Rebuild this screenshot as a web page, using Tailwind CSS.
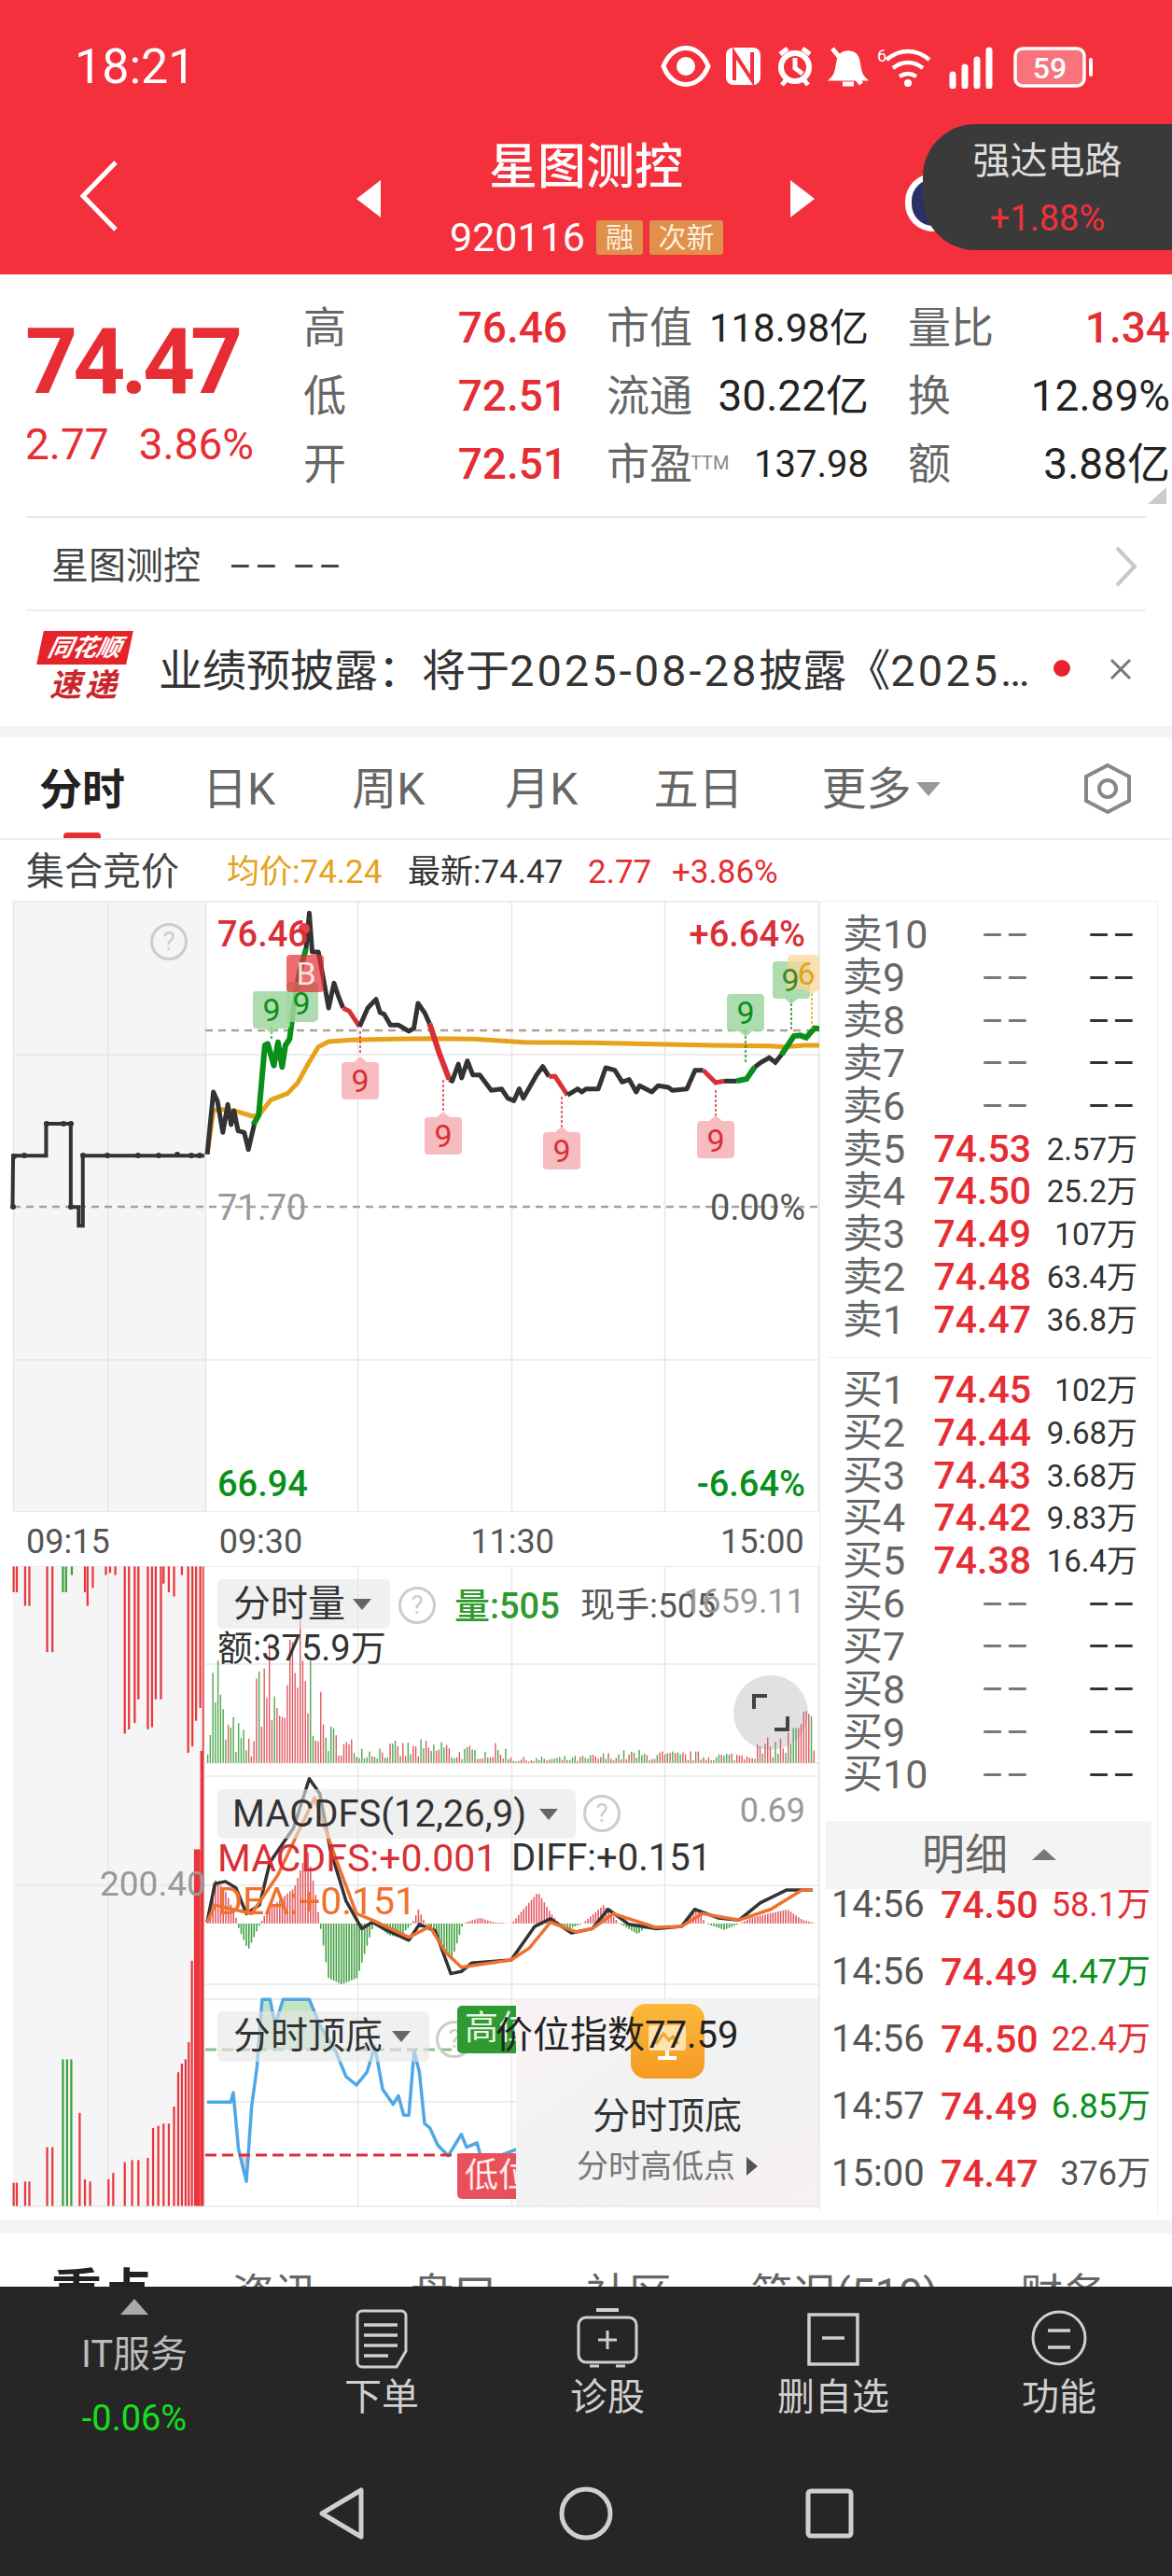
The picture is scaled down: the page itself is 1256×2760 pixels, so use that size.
<!DOCTYPE html>
<html lang="zh">
<head>
<meta charset="utf-8">
<title>星图测控</title>
<script src="https://cdn.jsdelivr.net/npm/@tailwindcss/browser@4"></script>
</head>
<body class="relative w-[1256px] h-[2760px] overflow-hidden bg-white text-[#222] font-['Roboto','Noto_Sans_CJK_SC',sans-serif]">

<!-- header -->
<header class="relative h-[294px] bg-[#f4303c] text-white">
  <div class="flex items-center justify-between h-[144px] pl-[80px] pr-[92px]">
    <span class="text-[52px] leading-none">18:21</span>
    <svg width="456" height="46" viewBox="708 49 456 46" fill="none" stroke="white" stroke-width="5">
      <path d="M711 71c10-26 38-26 48 0c-10 26-38 26-48 0z"/><circle cx="735" cy="71" r="10" fill="white" stroke="none"/>
      <rect x="778" y="51" width="37" height="40" rx="8" fill="white" stroke="none"/><path d="M787 86V57l19 29V56" stroke="#f4303c" stroke-width="4"/>
      <circle cx="852" cy="72" r="15" stroke-width="6"/><path d="M836 58l8-6M868 58l-8-6M852 62v11l8 6M838 91l5-6M866 91l-5-6"/>
      <path d="M893 84c6-6 4-14 7-22c3-7 15-7 18 0c3 8 1 16 7 22zM903 90h12M892 52l31 38" fill="white"/>
      <path d="M950 64c14-12 32-12 46 0M957 73c10-8 22-8 32 0M964 82c6-4 12-4 18 0" stroke-width="4.5"/><circle cx="973" cy="89" r="4" fill="white" stroke="none"/>
      <text x="940" y="66" fill="white" stroke="none" font-size="18">6</text>
      <path d="M1021 92v-12M1034 92v-20M1047 92v-28M1060 92v-38" stroke-width="7" stroke-linecap="round"/>
      <rect x="1088" y="52" width="74" height="40" rx="8" stroke-width="3.5" fill="#f8737b"/>
      <text x="1125" y="84" text-anchor="middle" fill="white" stroke="none" font-size="32" font-family="Roboto" font-weight="500">59</text>
    </svg>
  </div>
  <div class="absolute left-[1167px] top-[62px] w-[4px] h-[20px] rounded bg-white"></div>

  <svg class="absolute left-[84px] top-[172px]" width="44" height="76" viewBox="0 0 44 76" fill="none" stroke="white" stroke-width="5"><path d="M40 2L5 38l35 36"/></svg>
  <div class="absolute left-[382px] top-[193px] w-0 h-0 border-y-[20px] border-y-transparent border-r-[26px] border-r-white"></div>
  <div class="absolute left-[847px] top-[193px] w-0 h-0 border-y-[20px] border-y-transparent border-l-[26px] border-l-white"></div>
  <div class="absolute left-[378px] top-[154px] w-[500px] text-center text-[52px] leading-none font-medium">星图测控</div>
  <div class="absolute left-[482px] top-[236px] flex items-center gap-[7px]">
    <span class="mr-[5px] text-[43px] leading-[37px]">920116</span>
    <span class="h-[37px] w-[50px] rounded-[3px] bg-[#e0904a] text-center text-[30px] leading-[37px] text-[#fdeedd]">融</span>
    <span class="h-[37px] w-[79px] rounded-[3px] bg-[#e0904a] text-center text-[30px] leading-[37px] text-[#fdeedd]">次新</span>
  </div>

  <div class="absolute left-[970px] top-[186px] w-[60px] h-[62px] rounded-full bg-white flex items-center justify-center"><div class="w-[46px] h-[50px] rounded-full bg-[#2b2f66]"></div></div>
  <div class="absolute right-0 top-[133px] w-[267px] h-[135px] rounded-l-[56px] bg-[#3a3a3a] flex flex-col items-center gap-[20px] pt-[18px]">
    <span class="text-[40px] leading-[44px] text-[#ddd]">强达电路</span>
    <span class="text-[38px] leading-[38px] text-[#f4303c]">+1.88%</span>
  </div>
</header>

<!-- quote -->
<section class="relative flex h-[261px] border-b-2 border-[#e8e8e8] mx-[28px]">
  <div class="-ml-[1px] w-[298px] shrink-0 pt-[47px] text-[#e52d33]">
    <div class="text-[98px] leading-[94px] font-bold tracking-[-5px]">74.47</div>
    <div class="flex gap-[32px] mt-[19px] text-[46px] leading-[44px]"><span>2.77</span><span>3.86%</span></div>
  </div>
  <div class="pt-[21px] text-[46px] leading-[73px]">
    <div class="grid grid-cols-[283px_281px_281px] gap-x-[42px] h-[73px]">
      <div class="flex justify-between"><span class="text-[#666]">高</span><span class="font-medium text-[#e52d33]">76.46</span></div>
      <div class="flex justify-between"><span class="text-[#666]">市值</span><span class="text-[42px] text-[#222]">118.98亿</span></div>
      <div class="flex justify-between"><span class="text-[#666]">量比</span><span class="font-medium text-[#e52d33]">1.34</span></div>
    </div>
    <div class="grid grid-cols-[283px_281px_281px] gap-x-[42px] h-[73px]">
      <div class="flex justify-between"><span class="text-[#666]">低</span><span class="font-medium text-[#e52d33]">72.51</span></div>
      <div class="flex justify-between"><span class="text-[#666]">流通</span><span class="text-[46px] text-[#222]">30.22亿</span></div>
      <div class="flex justify-between"><span class="text-[#666]">换</span><span class="text-[46px] text-[#222]">12.89%</span></div>
    </div>
    <div class="grid grid-cols-[283px_281px_281px] gap-x-[42px] h-[73px]">
      <div class="flex justify-between"><span class="text-[#666]">开</span><span class="font-medium text-[#e52d33]">72.51</span></div>
      <div class="flex justify-between"><span class="text-[#666]">市盈<sup class="text-[20px] text-[#888] -ml-[2px]">TTM</sup></span><span class="text-[40px] text-[#222]">137.98</span></div>
      <div class="flex justify-between"><span class="text-[#666]">额</span><span class="text-[46px] text-[#222]">3.88亿</span></div>
    </div>
  </div>
  <div class="absolute right-[-22px] top-[228px] w-0 h-0 border-b-[18px] border-b-[#ccc] border-l-[20px] border-l-transparent"></div>
</section>

<!-- stock row -->
<section class="flex items-center justify-between h-[100px] mx-[28px] pl-[27px] pt-[5px] border-b-2 border-[#efefef]">
  <div class="flex items-center text-[#444]">
    <span class="text-[40px] leading-none">星图测控</span>
    <span class="ml-[30px] text-[38px] leading-none tracking-[3px]">–– ––</span>
  </div>
  <svg width="26" height="44" viewBox="0 0 26 44" fill="none" stroke="#c8c8c8" stroke-width="4" class="mr-[8px]"><path d="M3 2l19 20L3 42"/></svg>
</section>

<!-- news row -->
<section class="relative flex items-center h-[123px] pl-[43px] pt-[3px]">
  <div class="flex flex-col items-center w-[96px] -mt-[4px]">
    <div class="w-full h-[36px] -skew-x-12 bg-[#e4232b] text-center text-[26px] leading-[36px] font-bold italic text-white">同花顺</div>
    <div class="text-[34px] leading-[44px] font-bold italic tracking-[4px] text-[#c9262c]">速递</div>
  </div>
  <span class="ml-[31px] w-[960px] text-[47px] leading-none whitespace-nowrap text-[#333]">业绩预披露：将于<span class="tracking-[3px]">2025-08-28</span>披露《<span class="tracking-[3px]">2025</span>…</span>
  <span class="absolute left-[1129px] top-[52px] w-[18px] h-[18px] rounded-full bg-[#e8232b]"></span>
  <svg class="absolute left-[1188px] top-[49px]" width="26" height="26" viewBox="0 0 26 26" stroke="#777" stroke-width="3"><path d="M3 3l20 20M23 3L3 23"/></svg>
</section>
<div class="h-[12px] bg-[#f4f4f4]"></div>

<!-- tabs -->
<nav class="relative flex items-center h-[110px] pt-[3px] border-b-2 border-[#efefef] text-[48px] leading-none text-[#666]">
  <span class="ml-[42px] font-bold text-[46px] text-[#222]">分时</span>
  <span class="ml-[83px]">日K</span>
  <span class="ml-[82px]">周K</span>
  <span class="ml-[86px]">月K</span>
  <span class="ml-[81px]">五日</span>
  <span class="ml-[84px]">更多</span>
  <span class="ml-[6px] w-0 h-0 border-x-[13px] border-x-transparent border-t-[15px] border-t-[#999]"></span>
  <svg class="absolute left-[1159px] top-[27px]" width="56" height="56" viewBox="0 0 56 56" fill="none" stroke="#888" stroke-width="4"><path d="M28 3l23 12v26L28 53 5 41V15z"/><circle cx="28" cy="28" r="9"/></svg>
  <span class="absolute left-[68px] bottom-0 w-[40px] h-[6px] rounded-t bg-[#e52d33]"></span>
</nav>

<!-- price line -->
<div class="flex items-center h-[60px] pl-[28px] pt-[8px] text-[35px] leading-none">
  <span class="w-[215px] text-[41px] text-[#444]">集合竞价</span>
  <span class="w-[194px] text-[#e5a21a]">均价:74.24</span>
  <span class="w-[193px] text-[#333]">最新:74.47</span>
  <span class="w-[90px] text-[#e52d33]">2.77</span>
  <span class="text-[#e52d33]">+3.86%</span>
</div>

<!-- charts + order book -->
<main class="flex h-[1419px]">
  <div class="relative w-[878px] shrink-0">
    <!-- intraday price -->
    <div class="relative h-[660px]">
      <svg class="absolute inset-0" width="878" height="660" viewBox="0 960 878 660" fill="none">
        <rect x="14" y="966" width="206" height="654" fill="#f5f5f5"/>
        <path d="M14.5 966V1620M220.5 966V1620M116 966V1620M383.5 966V1620M548.5 966V1620M712.5 966V1620M877.5 966V1620M14 966H878M14 1130H878M14 1457H878M14 1620H878" stroke="#e6e6e6" stroke-width="1.5"/>
        <path d="M14 1293H878M220 1104H878" stroke="#a8a395" stroke-width="2.5" stroke-dasharray="8 6"/>
        <g transform="translate(0 900) scale(0.5618 0.3333)" stroke="#333" vector-effect="non-scaling-stroke">
          <polyline vector-effect="non-scaling-stroke" stroke-width="4" points="24,1180 25,1015 88,1015 88,912 135,912 135,1180 150,1180 150,1240 158,1240 158,1015 390,1015"/>
        </g>
        <g fill="#333"><circle cx="14" cy="1293" r="3"/><circle cx="15" cy="1239" r="3"/><circle cx="26" cy="1238" r="3"/><circle cx="50" cy="1204" r="3"/><circle cx="68" cy="1204" r="3"/><circle cx="76" cy="1204" r="3"/><circle cx="76" cy="1293" r="3"/><circle cx="89" cy="1238" r="3"/><circle cx="115" cy="1238" r="3"/><circle cx="148" cy="1238" r="3"/><circle cx="170" cy="1238" r="3"/><circle cx="190" cy="1237" r="3"/><circle cx="205" cy="1238" r="3"/><circle cx="214" cy="1238" r="3"/></g>

        <g transform="translate(200 950) scale(0.4412 0.3333)">
          <polyline vector-effect="non-scaling-stroke" stroke="#e5a21a" stroke-width="5" points="50,860 65,720 80,715 120,722 160,738 175,735 205,685 245,665 270,630 295,570 320,515 345,498 400,493 500,490 590,488 700,490 820,500 980,502 1140,506 1280,510 1420,512 1450,515 1500,510 1545,510"/>
          <polyline vector-effect="non-scaling-stroke" stroke="#333" stroke-width="5" stroke-linejoin="round" points="50,860 65,660 75,690 88,790 100,700 108,765 115,720 125,785 140,790 150,845 165,760"/>
          <polyline vector-effect="non-scaling-stroke" stroke="#0a8f1a" stroke-width="6" stroke-linejoin="round" points="162,765 175,735 190,510 197,505 212,575 222,500 232,580 240,510 250,490 262,370 275,270 290,200"/>
          <polyline vector-effect="non-scaling-stroke" stroke="#333" stroke-width="5" stroke-linejoin="round" points="290,200 298,85 305,210 320,210 330,280 345,390 358,310 368,350 380,390"/>
          <polyline vector-effect="non-scaling-stroke" stroke="#d92f36" stroke-width="5" points="380,390 395,400 420,450"/>
          <polyline vector-effect="non-scaling-stroke" stroke="#333" stroke-width="5" stroke-linejoin="round" points="420,450 440,390 460,362 470,405 480,410 495,445 515,445 540,465 552,455 562,375 578,405 590,440"/>
          <polyline vector-effect="non-scaling-stroke" stroke="#d92f36" stroke-width="6" points="590,440 600,480 615,540 638,620"/>
          <polyline vector-effect="non-scaling-stroke" stroke="#333" stroke-width="5" stroke-linejoin="round" points="638,620 645,625 660,570 668,615 682,560 695,605 712,605 740,655 765,650 780,680 795,688 808,650 818,680 850,605 865,578 880,610"/>
          <polyline vector-effect="non-scaling-stroke" stroke="#d92f36" stroke-width="5" points="880,610 895,610 925,670"/>
          <polyline vector-effect="non-scaling-stroke" stroke="#333" stroke-width="5" stroke-linejoin="round" points="925,670 950,650 960,660 970,650 1000,650 1018,582 1040,590 1058,628 1075,620 1092,660 1100,640 1130,660 1145,640 1170,645 1180,655 1215,650 1235,590 1255,590"/>
          <polyline vector-effect="non-scaling-stroke" stroke="#d92f36" stroke-width="5" points="1255,590 1285,630 1305,625"/>
          <polyline vector-effect="non-scaling-stroke" stroke="#333" stroke-width="5" points="1305,625 1335,625"/>
          <polyline vector-effect="non-scaling-stroke" stroke="#0a8f1a" stroke-width="6" points="1335,625 1360,618 1380,580"/>
          <polyline vector-effect="non-scaling-stroke" stroke="#333" stroke-width="5" points="1380,580 1395,565 1415,550 1430,565 1445,540"/>
          <polyline vector-effect="non-scaling-stroke" stroke="#0a8f1a" stroke-width="6" points="1445,540 1475,480 1490,478 1505,485 1525,455 1545,458"/>
        </g>

        <!-- signal marks -->
        <path d="M291 1100V1115M799 1105V1140M848 1070V1104" stroke="#0a8f1a" stroke-width="1.5" stroke-dasharray="3 2"/>
        <path d="M870 1064V1102" stroke="#e5a21a" stroke-width="1.5" stroke-dasharray="3 2"/>
        <path d="M386 1105V1130M475 1157V1190M602 1175V1208M767 1168V1196" stroke="#d92f36" stroke-width="1.5" stroke-dasharray="3 2"/>
        <g fill="#9fd6a0" fill-opacity="0.85">
          <path d="M275 1062h32a4 4 0 0 1 4 4v32a4 4 0 0 1-4 4h-9l-7 6-7-6h-9a4 4 0 0 1-4-4v-32a4 4 0 0 1 4-4z"/>
          <rect x="307" y="1052" width="34" height="43" rx="5"/>
          <path d="M783 1065h32a4 4 0 0 1 4 4v32a4 4 0 0 1-4 4h-9l-7 6-7-6h-9a4 4 0 0 1-4-4v-32a4 4 0 0 1 4-4z"/>
          <path d="M832 1030h32a4 4 0 0 1 4 4v32a4 4 0 0 1-4 4h-9l-7 6-7-6h-9a4 4 0 0 1-4-4v-32a4 4 0 0 1 4-4z"/>
        </g>
        <g fill="#f7bcbf">
          <path d="M379 1138l7-6 7 6h9a4 4 0 0 1 4 4v32a4 4 0 0 1-4 4h-32a4 4 0 0 1-4-4v-32a4 4 0 0 1 4-4z"/>
          <path d="M468 1197l7-6 7 6h9a4 4 0 0 1 4 4v32a4 4 0 0 1-4 4h-32a4 4 0 0 1-4-4v-32a4 4 0 0 1 4-4z"/>
          <path d="M595 1213l7-6 7 6h9a4 4 0 0 1 4 4v32a4 4 0 0 1-4 4h-32a4 4 0 0 1-4-4v-32a4 4 0 0 1 4-4z"/>
          <path d="M760 1201l7-6 7 6h9a4 4 0 0 1 4 4v32a4 4 0 0 1-4 4h-32a4 4 0 0 1-4-4v-32a4 4 0 0 1 4-4z"/>
        </g>
        <rect x="307" y="1023" width="40" height="40" rx="4" fill="#e52d33" fill-opacity="0.7"/>
        <path d="M844 1028a5 5 0 0 1 5-5h24a5 5 0 0 1 5 5v32l-8 5-8-5h-13a5 5 0 0 1-5-5z" fill="#fbd49a" fill-opacity="0.75"/>
        <circle cx="326" cy="995" r="6" fill="#e8404a"/>
        <g font-family="Roboto" font-size="34" text-anchor="middle">
          <text x="291" y="1094" fill="#0a8f1a">9</text>
          <text x="323" y="1087" fill="#0a8f1a">9</text>
          <text x="799" y="1097" fill="#0a8f1a">9</text>
          <text x="847" y="1062" fill="#3f8a20">9</text>
          <text x="864" y="1055" fill="#e5a21a">6</text>
          <text x="386" y="1170" fill="#d92f36">9</text>
          <text x="475" y="1229" fill="#d92f36">9</text>
          <text x="602" y="1245" fill="#d92f36">9</text>
          <text x="767" y="1234" fill="#d92f36">9</text>
          <text x="328" y="1055" fill="#ffffff" fill-opacity="0.85">B</text>
        </g>
      </svg>
      <span class="absolute left-[233px] top-[22px] text-[38px] leading-none font-medium text-[#d92f36]">76.46</span>
      <span class="absolute right-[15px] top-[22px] text-[38px] leading-none font-medium text-[#d92f36]">+6.64%</span>
      <span class="absolute left-[233px] top-[315px] text-[38px] leading-none text-[#999]">71.70</span>
      <span class="absolute right-[15px] top-[315px] text-[38px] leading-none text-[#555]">0.00%</span>
      <span class="absolute left-[233px] top-[611px] text-[38px] leading-none font-medium text-[#0a8f1a]">66.94</span>
      <span class="absolute right-[15px] top-[611px] text-[38px] leading-none font-medium text-[#0a8f1a]">-6.64%</span>
      <span class="absolute left-[161px] top-[29px] w-[40px] h-[40px] rounded-full border-[3px] border-[#ccc] text-center text-[28px] leading-[34px] text-[#ccc]">?</span>
    </div>

    <!-- time axis -->
    <div class="flex h-[58px] items-center pt-[6px] text-[36px] leading-none text-[#555]">
      <span class="ml-[28px]">09:15</span>
      <span class="ml-[117px]">09:30</span>
      <span class="ml-[180px]">11:30</span>
      <span class="ml-[178px]">15:00</span>
    </div>

    <!-- volume / MACD / top-bottom -->
    <div class="relative h-[701px]">
      <svg class="absolute inset-0" width="878" height="701" viewBox="0 1678 878 701" fill="none">
        <rect x="14" y="1678" width="206" height="686" fill="#f5f5f5"/>
        <path d="M116 1678V2364M383.5 1678V2364M548.5 1678V2364M712.5 1678V2364M877.5 1678V2364M220 1783H878M220 1889H878M220 1903H878M14 2020H878M220 2126H878M220 2142H878M220 2252H878M14 2364H878M14 1678H878" stroke="#e8e8e8" stroke-width="1.5"/>
        <g id="sub" transform="translate(0 1660) scale(0.5618 0.4592)">
          <g id="left-bars"></g>
          <g id="vol-bars"></g>
          <g id="macd-bars"></g>
          <polyline vector-effect="non-scaling-stroke" stroke="#333" stroke-width="3.5" stroke-linejoin="round" points="395,870 410,780 430,775 450,790 470,850 495,830 515,730 560,650 590,535 610,570 630,700 660,820 690,885 710,870 740,890 780,912 800,875 830,890 860,990 880,985 900,965 975,958 1020,880 1050,862 1090,895 1130,885 1160,840 1200,875 1250,885 1300,880 1325,840 1370,860 1410,865 1450,825 1500,795 1550,795"/>
          <polyline vector-effect="non-scaling-stroke" stroke="#f07030" stroke-width="3.5" stroke-linejoin="round" points="395,870 410,830 480,850 530,760 600,580 640,720 680,850 710,865 780,905 820,880 850,940 880,975 975,958 1010,930 1050,870 1100,893 1130,885 1170,850 1250,882 1300,880 1340,850 1410,865 1470,840 1530,795 1550,795"/>
          <polygon fill="#a9d8a9" fill-opacity="0.7" points="490,1168 500,1050 515,1050 525,1110 540,1050 590,1050 610,1110 640,1168"/>
          <polygon fill="#f5b8bc" fill-opacity="0.8" points="455,1413 470,1475 478,1413"/>
          <polyline vector-effect="non-scaling-stroke" stroke="#4fa8e6" stroke-width="3.5" stroke-linejoin="round" points="395,1290 440,1290 445,1268 455,1400 470,1475 480,1300 490,1210 500,1050 515,1050 525,1110 540,1050 590,1050 610,1110 640,1170 660,1230 680,1250 700,1220 715,1160 730,1260 750,1295 760,1275 770,1320 780,1320 790,1170 800,1220 810,1340 820,1350 835,1390 855,1415 880,1365 890,1395 910,1385 920,1430 985,1400"/>
        </g>
        <path d="M220 2196H553" stroke="#8cc08c" stroke-width="3" stroke-dasharray="12 6"/>
        <path d="M220 2309H553" stroke="#d9303a" stroke-width="3" stroke-dasharray="12 6"/>
      </svg>

      <span class="absolute left-[107px] top-[322px] text-[37px] leading-none text-[#999]">200.40</span>

      <div class="absolute left-[233px] top-[14px] flex items-center w-[185px] h-[53px] rounded-[6px] bg-[#e6e6e6]/60 pl-[17px]">
        <span class="text-[40px] leading-none text-[#333]">分时量</span>
        <span class="ml-[8px] w-0 h-0 border-x-[10px] border-x-transparent border-t-[12px] border-t-[#666]"></span>
      </div>
      <span class="absolute left-[427px] top-[22px] w-[40px] h-[40px] rounded-full border-[3px] border-[#ccc] text-center text-[28px] leading-[34px] text-[#ccc]">?</span>
      <span class="absolute left-[487px] top-[24px] text-[38px] leading-none font-medium text-[#2f9a2f]">量:505</span>
      <span class="absolute left-[622px] top-[24px] text-[37px] leading-none text-[#555]">现手:505</span>
      <span class="absolute right-[15px] top-[20px] text-[36px] leading-none text-[#999]">1659.11</span>
      <span class="absolute left-[233px] top-[69px] text-[38px] leading-none text-[#333]">额:375.9万</span>
      <div class="absolute left-[786px] top-[117px] w-[80px] h-[80px] rounded-full bg-[#888]/25"></div>
      <svg class="absolute left-[806px] top-[137px]" width="40" height="40" viewBox="0 0 40 40" fill="none" stroke="#444" stroke-width="4"><path d="M2 16V2h14M38 24v14H24"/></svg>

      <div class="absolute left-[233px] top-[239px] flex items-center w-[384px] h-[53px] rounded-[6px] bg-[#e6e6e6]/60 pl-[16px]">
        <span class="text-[40px] leading-none text-[#333]">MACDFS(12,26,9)</span>
        <span class="ml-[14px] w-0 h-0 border-x-[10px] border-x-transparent border-t-[12px] border-t-[#666]"></span>
      </div>
      <span class="absolute left-[625px] top-[245px] w-[40px] h-[40px] rounded-full border-[3px] border-[#ccc] text-center text-[28px] leading-[34px] text-[#ccc]">?</span>
      <span class="absolute right-[15px] top-[244px] text-[36px] leading-none text-[#999]">0.69</span>
      <span class="absolute left-[233px] top-[293px] text-[41px] leading-none text-[#d92f36]">MACDFS:+0.001</span>
      <span class="absolute left-[548px] top-[293px] text-[40px] leading-none text-[#333]">DIFF:+0.151</span>
      <span class="absolute left-[233px] top-[339px] text-[41px] leading-none text-[#f07030]">DEA:+0.151</span>

      <div class="absolute left-[233px] top-[477px] flex items-center w-[227px] h-[54px] rounded-[6px] bg-[#e6e6e6]/60 pl-[17px]">
        <span class="text-[40px] leading-none text-[#333]">分时顶底</span>
        <span class="ml-[10px] w-0 h-0 border-x-[10px] border-x-transparent border-t-[12px] border-t-[#666]"></span>
      </div>
      <span class="absolute left-[467px] top-[487px] w-[40px] h-[40px] rounded-full border-[3px] border-[#ccc] text-center text-[28px] leading-[34px] text-[#ccc]">?</span>
      <div class="absolute left-[490px] top-[471px] w-[63px] h-[51px] overflow-hidden rounded-l-[5px] bg-[#2f9a2f] pl-[8px] text-[36px] leading-[48px] whitespace-nowrap text-[#e8f5e8]">高位</div>
      <div class="absolute left-[490px] top-[629px] w-[63px] h-[49px] overflow-hidden rounded-l-[5px] bg-[#e8505a] pl-[8px] text-[36px] leading-[49px] whitespace-nowrap text-[#fdeaea]">低位</div>

      <!-- popup card -->
      <div class="absolute left-[553px] top-[464px] w-[324px] h-[221px] flex flex-col items-center bg-gradient-to-br from-[#fbf3f3] via-[#f0f2f3] to-[#f8f1f1]">
        <div class="mt-[5px] w-[79px] h-[80px] rounded-[16px] bg-gradient-to-b from-[#fbb93a] to-[#f59a23] flex items-center justify-center">
          <svg width="46" height="46" viewBox="0 0 46 46" fill="none"><rect x="3" y="6" width="40" height="27" rx="3" fill="#fde3b0"/><path d="M11 26l8-11 6 7 4-4 6 8" stroke="#f5a623" stroke-width="3"/><path d="M23 33v7M13 41h20" stroke="#fff" stroke-width="4"/></svg>
        </div>
        <span class="mt-[21px] text-[40px] leading-none text-[#333]">分时顶底</span>
        <div class="mt-[16px] flex items-center gap-[12px]">
          <span class="text-[34px] leading-none text-[#777]">分时高低点</span>
          <span class="w-0 h-0 border-y-[10px] border-y-transparent border-l-[12px] border-l-[#555]"></span>
        </div>
      </div>
      <span class="absolute left-[531px] top-[483px] text-[40px] leading-none text-[#222]">价位指数77.59</span>
    </div>
  </div>

  <!-- order book -->
  <aside class="w-[363px] h-[1406px] mt-[5px] border-x border-t border-[#eeeeee] rounded-t-[3px]">
    <div class="pt-[13px] pl-[24px] pr-[21px] text-[43px] leading-none text-[#666]">
      <div class="flex items-center h-[45.85px]"><span class="flex-1">卖10</span><span class="w-[102px] text-right text-[38px] text-[#777] tracking-[2px]">––</span><span class="w-[114px] text-right text-[38px] text-[#333] tracking-[2px]">––</span></div>
      <div class="flex items-center h-[45.85px]"><span class="flex-1">卖9</span><span class="w-[102px] text-right text-[38px] text-[#777] tracking-[2px]">––</span><span class="w-[114px] text-right text-[38px] text-[#333] tracking-[2px]">––</span></div>
      <div class="flex items-center h-[45.85px]"><span class="flex-1">卖8</span><span class="w-[102px] text-right text-[38px] text-[#777] tracking-[2px]">––</span><span class="w-[114px] text-right text-[38px] text-[#333] tracking-[2px]">––</span></div>
      <div class="flex items-center h-[45.85px]"><span class="flex-1">卖7</span><span class="w-[102px] text-right text-[38px] text-[#777] tracking-[2px]">––</span><span class="w-[114px] text-right text-[38px] text-[#333] tracking-[2px]">––</span></div>
      <div class="flex items-center h-[45.85px]"><span class="flex-1">卖6</span><span class="w-[102px] text-right text-[38px] text-[#777] tracking-[2px]">––</span><span class="w-[114px] text-right text-[38px] text-[#333] tracking-[2px]">––</span></div>
      <div class="flex items-center h-[45.85px]"><span class="flex-1">卖5</span><span class="text-[41px] font-medium text-[#e52d33]">74.53</span><span class="w-[114px] text-right text-[33px] text-[#333]">2.57万</span></div>
      <div class="flex items-center h-[45.85px]"><span class="flex-1">卖4</span><span class="text-[41px] font-medium text-[#e52d33]">74.50</span><span class="w-[114px] text-right text-[33px] text-[#333]">25.2万</span></div>
      <div class="flex items-center h-[45.85px]"><span class="flex-1">卖3</span><span class="text-[41px] font-medium text-[#e52d33]">74.49</span><span class="w-[114px] text-right text-[33px] text-[#333]">107万</span></div>
      <div class="flex items-center h-[45.85px]"><span class="flex-1">卖2</span><span class="text-[41px] font-medium text-[#e52d33]">74.48</span><span class="w-[114px] text-right text-[33px] text-[#333]">63.4万</span></div>
      <div class="flex items-center h-[45.85px]"><span class="flex-1">卖1</span><span class="text-[41px] font-medium text-[#e52d33]">74.47</span><span class="w-[114px] text-right text-[33px] text-[#333]">36.8万</span></div>
    </div>
    <div class="mx-[8px] mt-[17px] mb-[11px] h-px bg-[#eeeeee]"></div>
    <div class="pl-[24px] pr-[21px] text-[43px] leading-none text-[#666]">
      <div class="flex items-center h-[45.85px]"><span class="flex-1">买1</span><span class="text-[41px] font-medium text-[#e52d33]">74.45</span><span class="w-[114px] text-right text-[33px] text-[#333]">102万</span></div>
      <div class="flex items-center h-[45.85px]"><span class="flex-1">买2</span><span class="text-[41px] font-medium text-[#e52d33]">74.44</span><span class="w-[114px] text-right text-[33px] text-[#333]">9.68万</span></div>
      <div class="flex items-center h-[45.85px]"><span class="flex-1">买3</span><span class="text-[41px] font-medium text-[#e52d33]">74.43</span><span class="w-[114px] text-right text-[33px] text-[#333]">3.68万</span></div>
      <div class="flex items-center h-[45.85px]"><span class="flex-1">买4</span><span class="text-[41px] font-medium text-[#e52d33]">74.42</span><span class="w-[114px] text-right text-[33px] text-[#333]">9.83万</span></div>
      <div class="flex items-center h-[45.85px]"><span class="flex-1">买5</span><span class="text-[41px] font-medium text-[#e52d33]">74.38</span><span class="w-[114px] text-right text-[33px] text-[#333]">16.4万</span></div>
      <div class="flex items-center h-[45.85px]"><span class="flex-1">买6</span><span class="w-[102px] text-right text-[38px] text-[#777] tracking-[2px]">––</span><span class="w-[114px] text-right text-[38px] text-[#333] tracking-[2px]">––</span></div>
      <div class="flex items-center h-[45.85px]"><span class="flex-1">买7</span><span class="w-[102px] text-right text-[38px] text-[#777] tracking-[2px]">––</span><span class="w-[114px] text-right text-[38px] text-[#333] tracking-[2px]">––</span></div>
      <div class="flex items-center h-[45.85px]"><span class="flex-1">买8</span><span class="w-[102px] text-right text-[38px] text-[#777] tracking-[2px]">––</span><span class="w-[114px] text-right text-[38px] text-[#333] tracking-[2px]">––</span></div>
      <div class="flex items-center h-[45.85px]"><span class="flex-1">买9</span><span class="w-[102px] text-right text-[38px] text-[#777] tracking-[2px]">––</span><span class="w-[114px] text-right text-[38px] text-[#333] tracking-[2px]">––</span></div>
      <div class="flex items-center h-[45.85px]"><span class="flex-1">买10</span><span class="w-[102px] text-right text-[38px] text-[#777] tracking-[2px]">––</span><span class="w-[114px] text-right text-[38px] text-[#333] tracking-[2px]">––</span></div>
    </div>
    <div class="relative flex items-center h-[73px] mt-[26px] mx-[6px] bg-[#f4f4f4] pl-[103px]">
      <span class="text-[46px] leading-none text-[#666]">明细</span>
      <span class="ml-[26px] w-0 h-0 border-x-[13px] border-x-transparent border-b-[12px] border-b-[#777]"></span>
    </div>
    <div class="flex flex-col gap-[38px] pl-[12px] pr-[7px] text-[36px] leading-[34px]">
      <div class="flex items-center"><span class="w-[117px] text-[40px] text-[#555]">14:56</span><span class="text-[41px] font-medium text-[#e52d33]">74.50</span><span class="flex-1 text-right text-[#e52d33]">58.1万</span></div>
      <div class="flex items-center"><span class="w-[117px] text-[40px] text-[#555]">14:56</span><span class="text-[41px] font-medium text-[#e52d33]">74.49</span><span class="flex-1 text-right text-[#0a8f1a]">4.47万</span></div>
      <div class="flex items-center"><span class="w-[117px] text-[40px] text-[#555]">14:56</span><span class="text-[41px] font-medium text-[#e52d33]">74.50</span><span class="flex-1 text-right text-[#e52d33]">22.4万</span></div>
      <div class="flex items-center"><span class="w-[117px] text-[40px] text-[#555]">14:57</span><span class="text-[41px] font-medium text-[#e52d33]">74.49</span><span class="flex-1 text-right text-[#0a8f1a]">6.85万</span></div>
      <div class="flex items-center"><span class="w-[117px] text-[40px] text-[#555]">15:00</span><span class="text-[41px] font-medium text-[#e52d33]">74.47</span><span class="flex-1 text-right text-[#555]">376万</span></div>
    </div>
  </aside>
</main>

<div class="h-[14px] bg-[#f4f4f4]"></div>

<!-- lower tabs, cut off by the bottom bar -->
<div class="relative h-[57px] overflow-hidden text-[46px] leading-none text-[#666]">
  <div class="flex pt-[42px] whitespace-nowrap">
    <span class="ml-[55px] font-bold text-[#222] text-[54px] -mt-[4px]">重点</span>
    <span class="ml-[85px]">资讯</span>
    <span class="ml-[100px]">盘口</span>
    <span class="ml-[96px]">社区</span>
    <span class="ml-[84px]">简况(519)</span>
    <span class="ml-[88px]">财务</span>
  </div>
</div>

<!-- bottom bar -->
<footer class="h-[310px] bg-[#262626] text-[#cfcfcf]">
  <div class="flex h-[175px]">
    <div class="flex flex-col items-center w-[288px] pt-[13px]">
      <span class="w-0 h-0 border-x-[15px] border-x-transparent border-b-[17px] border-b-[#aaa]"></span>
      <span class="mt-[23px] text-[40px] leading-none text-[#bbb]">IT服务</span>
      <span class="mt-[29px] text-[38px] leading-none text-[#14e01c]">-0.06%</span>
    </div>
    <div class="flex flex-col items-center w-[242px] pt-[23px] text-[40px] leading-none">
      <svg width="58" height="66" viewBox="0 0 58 66" fill="none" stroke="#cfcfcf" stroke-width="3"><path d="M8 3h42a5 5 0 0 1 5 5v38l-10 17H8a5 5 0 0 1-5-5V8a5 5 0 0 1 5-5z"/><path d="M10 18h36M10 29h36M10 40h36M10 51h26" stroke-width="3.5"/></svg>
      <span class="mt-[10px]">下单</span>
    </div>
    <div class="flex flex-col items-center w-[242px] pt-[23px] text-[40px] leading-none">
      <svg width="66" height="66" viewBox="0 0 66 66" fill="none" stroke="#cfcfcf" stroke-width="3"><path d="M21 2h24" stroke-width="4"/><rect x="2" y="10" width="62" height="48" rx="8"/><path d="M33 24v20M23 34h20M14 62h10M42 62h10" stroke-width="3"/></svg>
      <span class="mt-[10px]">诊股</span>
    </div>
    <div class="flex flex-col items-center w-[242px] pt-[23px] text-[40px] leading-none">
      <svg width="56" height="66" viewBox="0 0 56 66" fill="none" stroke="#cfcfcf" stroke-width="3.5"><rect x="2" y="7" width="52" height="53"/><path d="M16 32h24"/></svg>
      <span class="mt-[10px]">删自选</span>
    </div>
    <div class="flex flex-col items-center w-[242px] pt-[23px] text-[40px] leading-none">
      <svg width="60" height="66" viewBox="0 0 60 66" fill="none" stroke="#cfcfcf" stroke-width="3"><circle cx="30" cy="32" r="28"/><path d="M18 24h24M18 42h24" stroke-width="3.5"/></svg>
      <span class="mt-[10px]">功能</span>
    </div>
  </div>
  <div class="flex items-center h-[130px] pt-[5px] pl-[340px]">
    <svg width="52" height="58" viewBox="0 0 52 58" fill="none" stroke="#cfcfcf" stroke-width="5" stroke-linejoin="round"><path d="M47 4v50L5 29z"/></svg>
    <svg class="ml-[206px]" width="60" height="60" viewBox="0 0 60 60" fill="none" stroke="#cfcfcf" stroke-width="5"><circle cx="30" cy="30" r="26"/></svg>
    <svg class="ml-[205px]" width="52" height="54" viewBox="0 0 52 54" fill="none" stroke="#cfcfcf" stroke-width="5"><rect x="3" y="3" width="46" height="48" rx="3"/></svg>
  </div>
</footer>

<script>
  var NS = 'http://www.w3.org/2000/svg';
  var seed = 7;
  function rnd() { seed = (seed * 16807) % 2147483647; return seed / 2147483647; }
  function bar(parent, x, y1, y2, w, color) {
    var r = document.createElementNS(NS, 'rect');
    r.setAttribute('x', x);
    r.setAttribute('y', Math.min(y1, y2));
    r.setAttribute('width', w);
    r.setAttribute('height', Math.abs(y2 - y1));
    r.setAttribute('fill', color);
    parent.appendChild(r);
  }
  function lerp(pts, x) {
    for (var i = 1; i < pts.length; i++) {
      if (x <= pts[i][0]) {
        var a = pts[i - 1], b = pts[i];
        return a[1] + (b[1] - a[1]) * (x - a[0]) / (b[0] - a[0]);
      }
    }
    return pts[pts.length - 1][1];
  }

  // pre-market bars, [x, end y]; hanging from the top and rising from the bottom
  var RED = '#e8363c', GREEN = '#3aa03a';
  var left = document.getElementById('left-bars');
  [[24,100],[30,100],[46,132],[54,132],[88,240],[98,240],[118,100,1],[124,100,1],[135,60,1],[160,100],[165,132],[175,90],[200,60],[208,55],[218,60],[236,430],[244,420],[255,405],[262,350],[280,420],[288,415],[295,350],[305,350],[310,80],[320,100],[330,110],[345,60],[357,475],[365,460],[372,400],[380,370]].forEach(function (b) {
    bar(left, b[0], 40, b[1], 4, b[2] ? GREEN : RED);
  });
  [[24,1478],[30,1478],[46,1475],[54,1475],[88,1395],[98,1395],[118,1190,1],[126,1190,1],[134,1190,1],[150,1315],[160,1470],[170,1475],[205,1470],[214,1455],[236,1430],[250,1425],[262,1425],[280,1420],[290,1350],[300,1345],[310,1340],[320,1340],[330,1300],[338,1220],[345,1200],[352,1190],[358,1150],[364,960]].forEach(function (b) {
    bar(left, b[0], 1532, b[1], 4, b[2] ? GREEN : RED);
  });
  bar(left, 370, 1532, 700, 12, RED);
  bar(left, 382, 1532, 470, 7, RED);
  bar(left, 386, 470, 40, 3, RED);

  // volume histogram
  var vol = document.getElementById('vol-bars');
  var volTop = [[395,400],[410,90],[425,350],[450,390],[480,440],[500,60],[520,260],[550,180],[570,130],[590,180],[610,330],[630,400],[660,430],[700,450],[830,440],[840,420],[860,460],[960,450],[980,485],[1110,480],[1200,465],[1300,470],[1400,470],[1500,420],[1535,350],[1552,360]];
  for (var x = 395; x < 1552; x += 4.9) {
    var full = 498 - lerp(volTop, x);
    var h = full * (0.2 + Math.pow(rnd(), 1.5) * 0.8);
    var upOdds = x < 470 ? 0.2 : (x < 610 ? 0.7 : (x > 1420 ? 0.75 : 0.5));
    bar(vol, x, 498, 498 - h, 2.5, rnd() < upOdds ? '#e05a62' : '#4fa84f');
  }

  // MACD histogram
  var macd = document.getElementById('macd-bars');
  var macdY = [[395,870],[410,770],[430,800],[449,860],[450,873],[472,935],[495,873],[505,850],[530,820],[560,790],[585,700],[600,800],[609,873],[625,1000],[650,1015],[680,1000],[700,920],[712,873],[740,900],[760,905],[785,873],[797,840],[810,873],[830,905],[860,960],[882,873],[900,865],[915,860],[940,870],[975,873],[990,850],[1025,800],[1050,850],[1065,873],[1085,885],[1110,873],[1150,830],[1180,873],[1215,898],[1240,873],[1300,873],[1325,835],[1345,873],[1380,888],[1410,873],[1430,860],[1500,840],[1530,865],[1552,872]];
  for (var m = 395; m < 1552; m += 4.9) {
    var my = lerp(macdY, m);
    bar(macd, m, 873, my, 2.8, my < 873 ? '#e05a62' : '#3f9f3f');
  }
</script>
</body>
</html>
